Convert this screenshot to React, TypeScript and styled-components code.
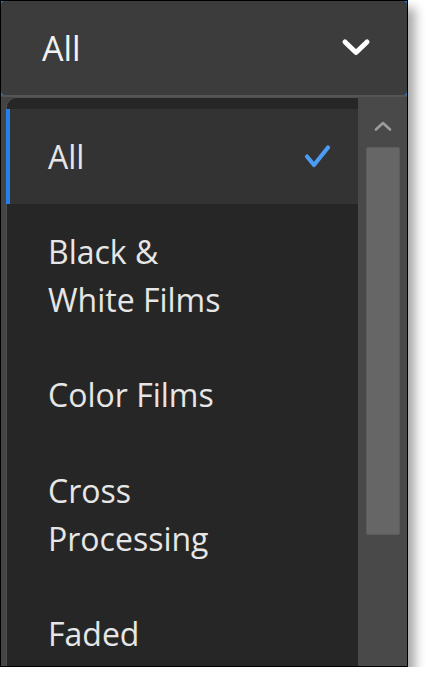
import styled, { createGlobalStyle } from 'styled-components';

const GlobalStyle = createGlobalStyle`
  body {
    margin: 0;
    background: #ffffff;
    font-family: 'Open Sans', 'Liberation Sans', sans-serif;
  }
`;

const Frame = styled.div`
  width: 408px;
  height: 667px;
  box-sizing: border-box;
  border: 1px solid #000;
  display: flex;
  flex-direction: column;
  background: #474747;
  box-shadow: 7px 8px 10px rgba(0, 0, 0, 0.35);
  overflow: hidden;
`;

const FocusRing = styled.div`
  background: #2680eb;
`;

const Trigger = styled.button`
  width: 100%;
  height: 94px;
  display: flex;
  align-items: center;
  justify-content: space-between;
  padding: 0 36px 0 41px;
  box-sizing: border-box;
  border: none;
  border-radius: 4px;
  background: #3c3c3c;
  color: #f2f2f2;
  font-family: inherit;
  font-size: 34px;
  cursor: pointer;
`;

const Popover = styled.div`
  flex: 1;
  min-height: 0;
  display: flex;
  padding-left: 5px;
  border-top: 2px solid #555;
  background: #444;
`;

const List = styled.ul`
  flex: 1;
  margin: 0;
  padding: 12px 0 0;
  list-style: none;
  background: #262626;
  border-top-left-radius: 9px;
  box-shadow: inset 1px 1px 0 #4e4e4e;
  overflow: hidden;
`;

const Item = styled.li<{ $selected?: boolean }>`
  position: relative;
  display: flex;
  align-items: center;
  justify-content: space-between;
  padding: 23.7px 26px 23.7px 42px;
  background: ${({ $selected }) => ($selected ? '#333333' : 'transparent')};
  color: #e6e6e6;
  font-size: 32px;
  line-height: 48px;

  &::before {
    content: '';
    position: absolute;
    left: 0;
    top: 0;
    bottom: 0;
    width: 4px;
    background: ${({ $selected }) => ($selected ? '#2680eb' : 'transparent')};
  }
`;

const Label = styled.span`
  max-width: 186px;
`;

const ScrollTrack = styled.div`
  width: 49px;
  display: flex;
  flex-direction: column;
  align-items: center;
  padding-top: 24px;
  background: #494949;
`;

const ScrollThumb = styled.div`
  width: 34px;
  height: 388px;
  margin-top: 16px;
  box-sizing: border-box;
  background: #666;
  border: 1px solid #5c5c5c;
  border-radius: 2px;
`;

const options = ['All', 'Black & White Films', 'Color Films', 'Cross Processing', 'Faded'];

function ChevronDown() {
  return (
    <svg width="30" height="20" viewBox="0 0 30 20">
      <path d="M4 4 L15 14.5 L26 4" fill="none" stroke="#fff" strokeWidth="5" strokeLinecap="round" strokeLinejoin="round" />
    </svg>
  );
}

function CheckMark() {
  return (
    <svg width="28" height="26" viewBox="0 0 28 26">
      <path d="M3 12.5 L10 21 L24 3.5" fill="none" stroke="#4b9cf5" strokeWidth="4.2" strokeLinecap="round" strokeLinejoin="round" />
    </svg>
  );
}

function ChevronUp() {
  return (
    <svg width="18" height="10" viewBox="0 0 18 10">
      <path d="M2 8.5 L9 2 L16 8.5" fill="none" stroke="#9c9c9c" strokeWidth="2.6" strokeLinecap="round" strokeLinejoin="round" />
    </svg>
  );
}

export default function App() {
  const selected = 'All';

  return (
    <>
      <GlobalStyle />
      <Frame>
        <FocusRing>
          <Trigger>
            <span>{selected}</span>
            <ChevronDown />
          </Trigger>
        </FocusRing>
        <Popover>
          <List>
            {options.map((option) => (
              <Item key={option} $selected={option === selected}>
                <Label>{option}</Label>
                {option === selected && <CheckMark />}
              </Item>
            ))}
          </List>
          <ScrollTrack>
            <ChevronUp />
            <ScrollThumb />
          </ScrollTrack>
        </Popover>
      </Frame>
    </>
  );
}
